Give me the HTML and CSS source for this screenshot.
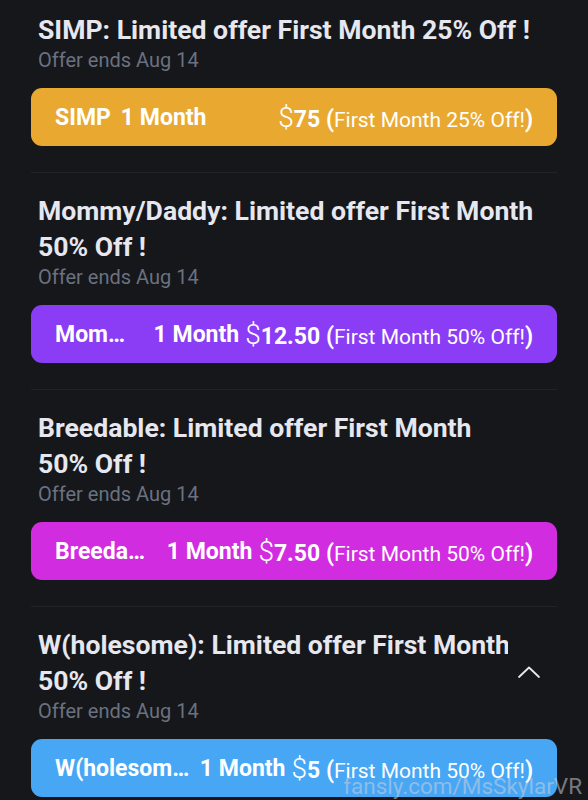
FILE: index.html
```html
<!DOCTYPE html>
<html>
<head>
<meta charset="utf-8">
<link rel="stylesheet" href="styles.css">
</head>
<body>
<div class="list">
  <section class="offer">
    <h2 class="title">SIMP: Limited offer First Month 25%&nbsp;Off&nbsp;!</h2>
    <div class="ends">Offer ends Aug 14</div>
    <div class="btn yellow">
      <div class="left"><span class="name">SIMP</span><span class="dur">1 Month</span></div>
      <div class="price"><span class="cur">$</span><b>75</b> <b>(</b><span class="note">First Month 25% Off!</span><b>)</b></div>
    </div>
  </section>
  <section class="offer">
    <h2 class="title">Mommy/Daddy: Limited offer First Month 50%&nbsp;Off&nbsp;!</h2>
    <div class="ends">Offer ends Aug 14</div>
    <div class="btn purple">
      <div class="left"><span class="name">Mommy/Daddy</span><span class="dur">1 Month</span></div>
      <div class="price"><span class="cur">$</span><b>12.50</b> <b>(</b><span class="note">First Month 50% Off!</span><b>)</b></div>
    </div>
  </section>
  <section class="offer">
    <h2 class="title">Breedable: Limited offer First Month 50%&nbsp;Off&nbsp;!</h2>
    <div class="ends">Offer ends Aug 14</div>
    <div class="btn magenta">
      <div class="left"><span class="name">Breedable</span><span class="dur">1 Month</span></div>
      <div class="price"><span class="cur">$</span><b>7.50</b> <b>(</b><span class="note">First Month 50% Off!</span><b>)</b></div>
    </div>
  </section>
  <section class="offer">
    <h2 class="title">W(holesome): Limited offer First Month 50%&nbsp;Off&nbsp;!</h2>
    <div class="ends">Offer ends Aug 14</div>
    <div class="btn blue">
      <div class="left"><span class="name">W(holesome)</span><span class="dur">1 Month</span></div>
      <div class="price"><span class="cur">$</span><b>5</b> <b>(</b><span class="note">First Month 50% Off!</span><b>)</b></div>
    </div>
  </section>
</div>
<button class="to-top" aria-label="Scroll to top">
  <svg width="24" height="16" viewBox="0 0 24 16"><polyline points="2,13 12,3.5 22,13" fill="none" stroke="#e8e8ec" stroke-width="1.8" stroke-linecap="round" stroke-linejoin="round"/></svg>
</button>
<div class="watermark">fansly.com/MsSkylarVR</div>
</body>
</html>
```
FILE: styles.css
```css
html, body {
  margin: 0;
  padding: 0;
  background: #15171b;
  height: 800px;
  overflow: hidden;
}
body {
  font-family: Roboto, "Liberation Sans", sans-serif;
  color: #e6e7ee;
  position: relative;
}
.list {
  padding: 0 31px;
}
.offer {
  padding: 20px 0 26px;
  border-top: 1px solid #202329;
}
.offer:first-child {
  border-top: none;
  padding-top: 12px;
}
.title {
  margin: 0;
  padding: 0 7px;
  font-size: 26.6px;
  font-weight: 700;
  line-height: 36px;
  color: #e6e7ef;
}
.ends {
  padding: 0 7px;
  font-size: 20px;
  line-height: 24px;
  color: #6b7180;
}
.btn {
  margin-top: 16px;
  height: 58px;
  border-radius: 11px;
  display: flex;
  align-items: center;
  justify-content: space-between;
  padding: 0 24px;
  color: #fff;
  font-size: 23px;
  white-space: nowrap;
  gap: 6px;
}
.yellow { background: #e9a930; }
.purple { background: #8b3cf5; }
.magenta { background: #d22ce1; }
.blue { background: #47a7f5; }
.left {
  display: flex;
  align-items: center;
  min-width: 0;
  flex: 0 1 auto;
  font-weight: 700;
  gap: 4px;
}
.name {
  min-width: 0;
  overflow: hidden;
  text-overflow: ellipsis;
  flex: 0 1 auto;
  padding-right: 6px;
}
.dur {
  flex: none;
}
.price {
  flex: none;
}
.price b {
  font-weight: 700;
}
.cur {
  font-weight: 300;
  font-size: 28px;
}
.note {
  font-weight: 400;
  font-size: 21px;
}
.to-top {
  position: absolute;
  left: 508px;
  top: 626px;
  width: 42px;
  height: 92px;
  background: #15171b;
  border: none;
  padding: 0;
  display: flex;
  align-items: center;
  justify-content: center;
}
.to-top svg { display: block; }
.watermark {
  position: absolute;
  right: 6px;
  bottom: 1px;
  font-size: 22.5px;
  line-height: 26px;
  color: rgba(205, 208, 218, 0.55);
}
```
